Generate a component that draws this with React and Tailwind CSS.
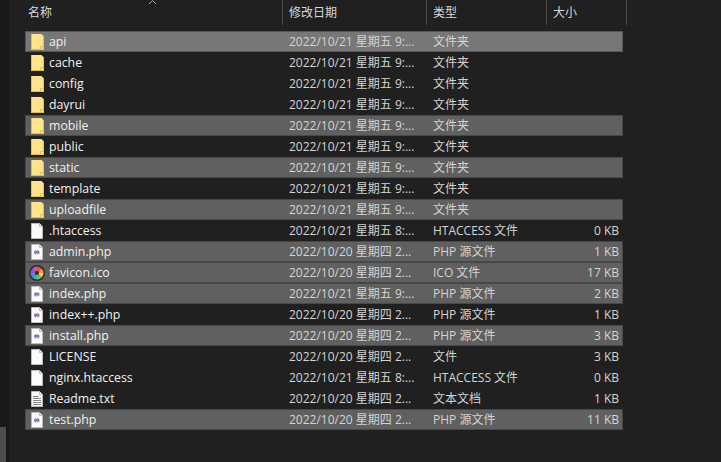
const files = [
  { name: "api", date: "2022/10/21 星期五 9:...", type: "文件夹", icon: "folder", sel: 2 },
  { name: "cache", date: "2022/10/21 星期五 9:...", type: "文件夹", icon: "folder" },
  { name: "config", date: "2022/10/21 星期五 9:...", type: "文件夹", icon: "folder" },
  { name: "dayrui", date: "2022/10/21 星期五 9:...", type: "文件夹", icon: "folder" },
  { name: "mobile", date: "2022/10/21 星期五 9:...", type: "文件夹", icon: "folder", sel: 1 },
  { name: "public", date: "2022/10/21 星期五 9:...", type: "文件夹", icon: "folder" },
  { name: "static", date: "2022/10/21 星期五 9:...", type: "文件夹", icon: "folder", sel: 1 },
  { name: "template", date: "2022/10/21 星期五 9:...", type: "文件夹", icon: "folder" },
  { name: "uploadfile", date: "2022/10/21 星期五 9:...", type: "文件夹", icon: "folder", sel: 1 },
  { name: ".htaccess", date: "2022/10/21 星期五 8:...", type: "HTACCESS 文件", size: "0 KB", icon: "file" },
  { name: "admin.php", date: "2022/10/20 星期四 2...", type: "PHP 源文件", size: "1 KB", icon: "php", sel: 1 },
  { name: "favicon.ico", date: "2022/10/20 星期四 2...", type: "ICO 文件", size: "17 KB", icon: "ico", sel: 1 },
  { name: "index.php", date: "2022/10/21 星期五 9:...", type: "PHP 源文件", size: "2 KB", icon: "php", sel: 1 },
  { name: "index++.php", date: "2022/10/20 星期四 2...", type: "PHP 源文件", size: "1 KB", icon: "php" },
  { name: "install.php", date: "2022/10/20 星期四 2...", type: "PHP 源文件", size: "3 KB", icon: "php", sel: 1 },
  { name: "LICENSE", date: "2022/10/20 星期四 2...", type: "文件", size: "3 KB", icon: "file" },
  { name: "nginx.htaccess", date: "2022/10/21 星期五 8:...", type: "HTACCESS 文件", size: "0 KB", icon: "file" },
  { name: "Readme.txt", date: "2022/10/20 星期四 2...", type: "文本文档", size: "1 KB", icon: "txt" },
  { name: "test.php", date: "2022/10/20 星期四 2...", type: "PHP 源文件", size: "11 KB", icon: "php", sel: 1 },
];

function FolderIcon() {
  return (
    <svg width="13" height="16" viewBox="0 0 13 16" className="shrink-0">
      <path d="M0 0h10.5L13 2.5V16H0z" fill="#ffe28a" />
      <path d="M0.5 15.5h12M12.5 2.5v13M0.5 0v16" stroke="#e8bf4f" fill="none" />
      <path d="M9.5 15.5v-3h3" stroke="#e8bf4f" fill="none" />
    </svg>
  );
}

function FileIcon({ children }) {
  return (
    <svg width="12" height="16" viewBox="0 0 12 16" className="shrink-0">
      <path d="M0.5 0.5h8l3 3v12h-11z" fill="#fbfbfb" stroke="#bdbdbd" />
      <path d="M8.5 0.5v3h3" fill="#e4e4e4" stroke="#bdbdbd" />
      {children}
    </svg>
  );
}

function IcoIcon() {
  const colors = ["#e8504a", "#f09a38", "#f2d64b", "#7cc24d", "#38b6a8", "#4a8fe0", "#8a5ccf", "#d257a8"];
  return (
    <svg width="16" height="16" viewBox="-8 -8 16 16" className="shrink-0 ml-[-2px] mr-[-1px]">
      <circle r="8" fill="#2c2c2c" />
      {colors.map((c, i) => (
        <path key={c} d="M0 0L0 -6.5A6.5 6.5 0 0 1 4.6 -4.6z" fill={c} transform={`rotate(${i * 45})`} />
      ))}
      <circle r="2" fill="#2c2c2c" />
    </svg>
  );
}

function RowIcon({ kind }) {
  if (kind === "folder") return <FolderIcon />;
  if (kind === "ico") return <IcoIcon />;
  if (kind === "php")
    return (
      <FileIcon>
        <path d="M3 7.5l1-1h3.5l1 1v2h-1v1h-1v-1H5v1H4v-1H3z" fill="#9a70c4" />
      </FileIcon>
    );
  if (kind === "txt")
    return (
      <FileIcon>
        <path d="M2 5.5h6M2 7.5h8M2 9.5h8M2 11.5h8M2 13.5h8" stroke="#8a8a8a" />
      </FileIcon>
    );
  return <FileIcon />;
}

function Row({ f }) {
  const bg =
    f.sel === 2
      ? "bg-[#777777] border-[#565656]"
      : f.sel === 1
        ? "bg-[#606060] border-[#484848]"
        : "border-transparent";
  return (
    <div className={`h-[21px] w-[598px] flex items-center border ${bg} text-[12px] leading-none`}>
      <div className="w-[257px] flex items-center pl-[5px] shrink-0">
        <div className="w-[14px] flex shrink-0">
          <RowIcon kind={f.icon} />
        </div>
        <span className="ml-[4px] mt-[2px] text-[12.3px] text-[#f0f0f0]">{f.name}</span>
      </div>
      <div className="w-[144px] pl-[6px] shrink-0 text-[#d4d4d4] whitespace-nowrap">{f.date}</div>
      <div className="w-[120px] pl-[6px] shrink-0 text-[#d4d4d4] whitespace-nowrap">{f.type}</div>
      <div className="w-[75px] shrink-0 text-right text-[#d4d4d4] pr-[3px] whitespace-nowrap">{f.size}</div>
    </div>
  );
}

export default function App() {
  return (
    <div className="w-[721px] h-[462px] flex bg-[#202020] overflow-hidden font-['Open_Sans','Noto_Sans_CJK_SC',sans-serif]">
      <div className="w-[9px] shrink-0 bg-[#191919] flex flex-col justify-end border-r border-[#161616]">
        <div className="w-[6px] h-[35px] bg-[#4d4d4d]" />
      </div>
      <div className="flex-1 min-w-0">
        <div className="flex h-[25px] mb-[6px] text-[12px] text-[#d8d8d8] relative">
          <svg width="10" height="4" viewBox="0 0 10 4" className="absolute left-[139px] top-0">
            <path d="M1 4L4.5 0.5L8 4" stroke="#a8a8a8" fill="none" />
          </svg>
          <div className="w-[274px] pl-[19px] pt-[4px] border-r border-[#4b4b4b]">名称</div>
          <div className="w-[144px] pl-[6px] pt-[4px] border-r border-[#4b4b4b]">修改日期</div>
          <div className="w-[120px] pl-[6px] pt-[4px] border-r border-[#4b4b4b]">类型</div>
          <div className="w-[80px] pl-[6px] pt-[4px] border-r border-[#4b4b4b]">大小</div>
        </div>
        <div className="ml-[16px]">
          {files.map((f) => (
            <Row key={f.name} f={f} />
          ))}
        </div>
      </div>
    </div>
  );
}
